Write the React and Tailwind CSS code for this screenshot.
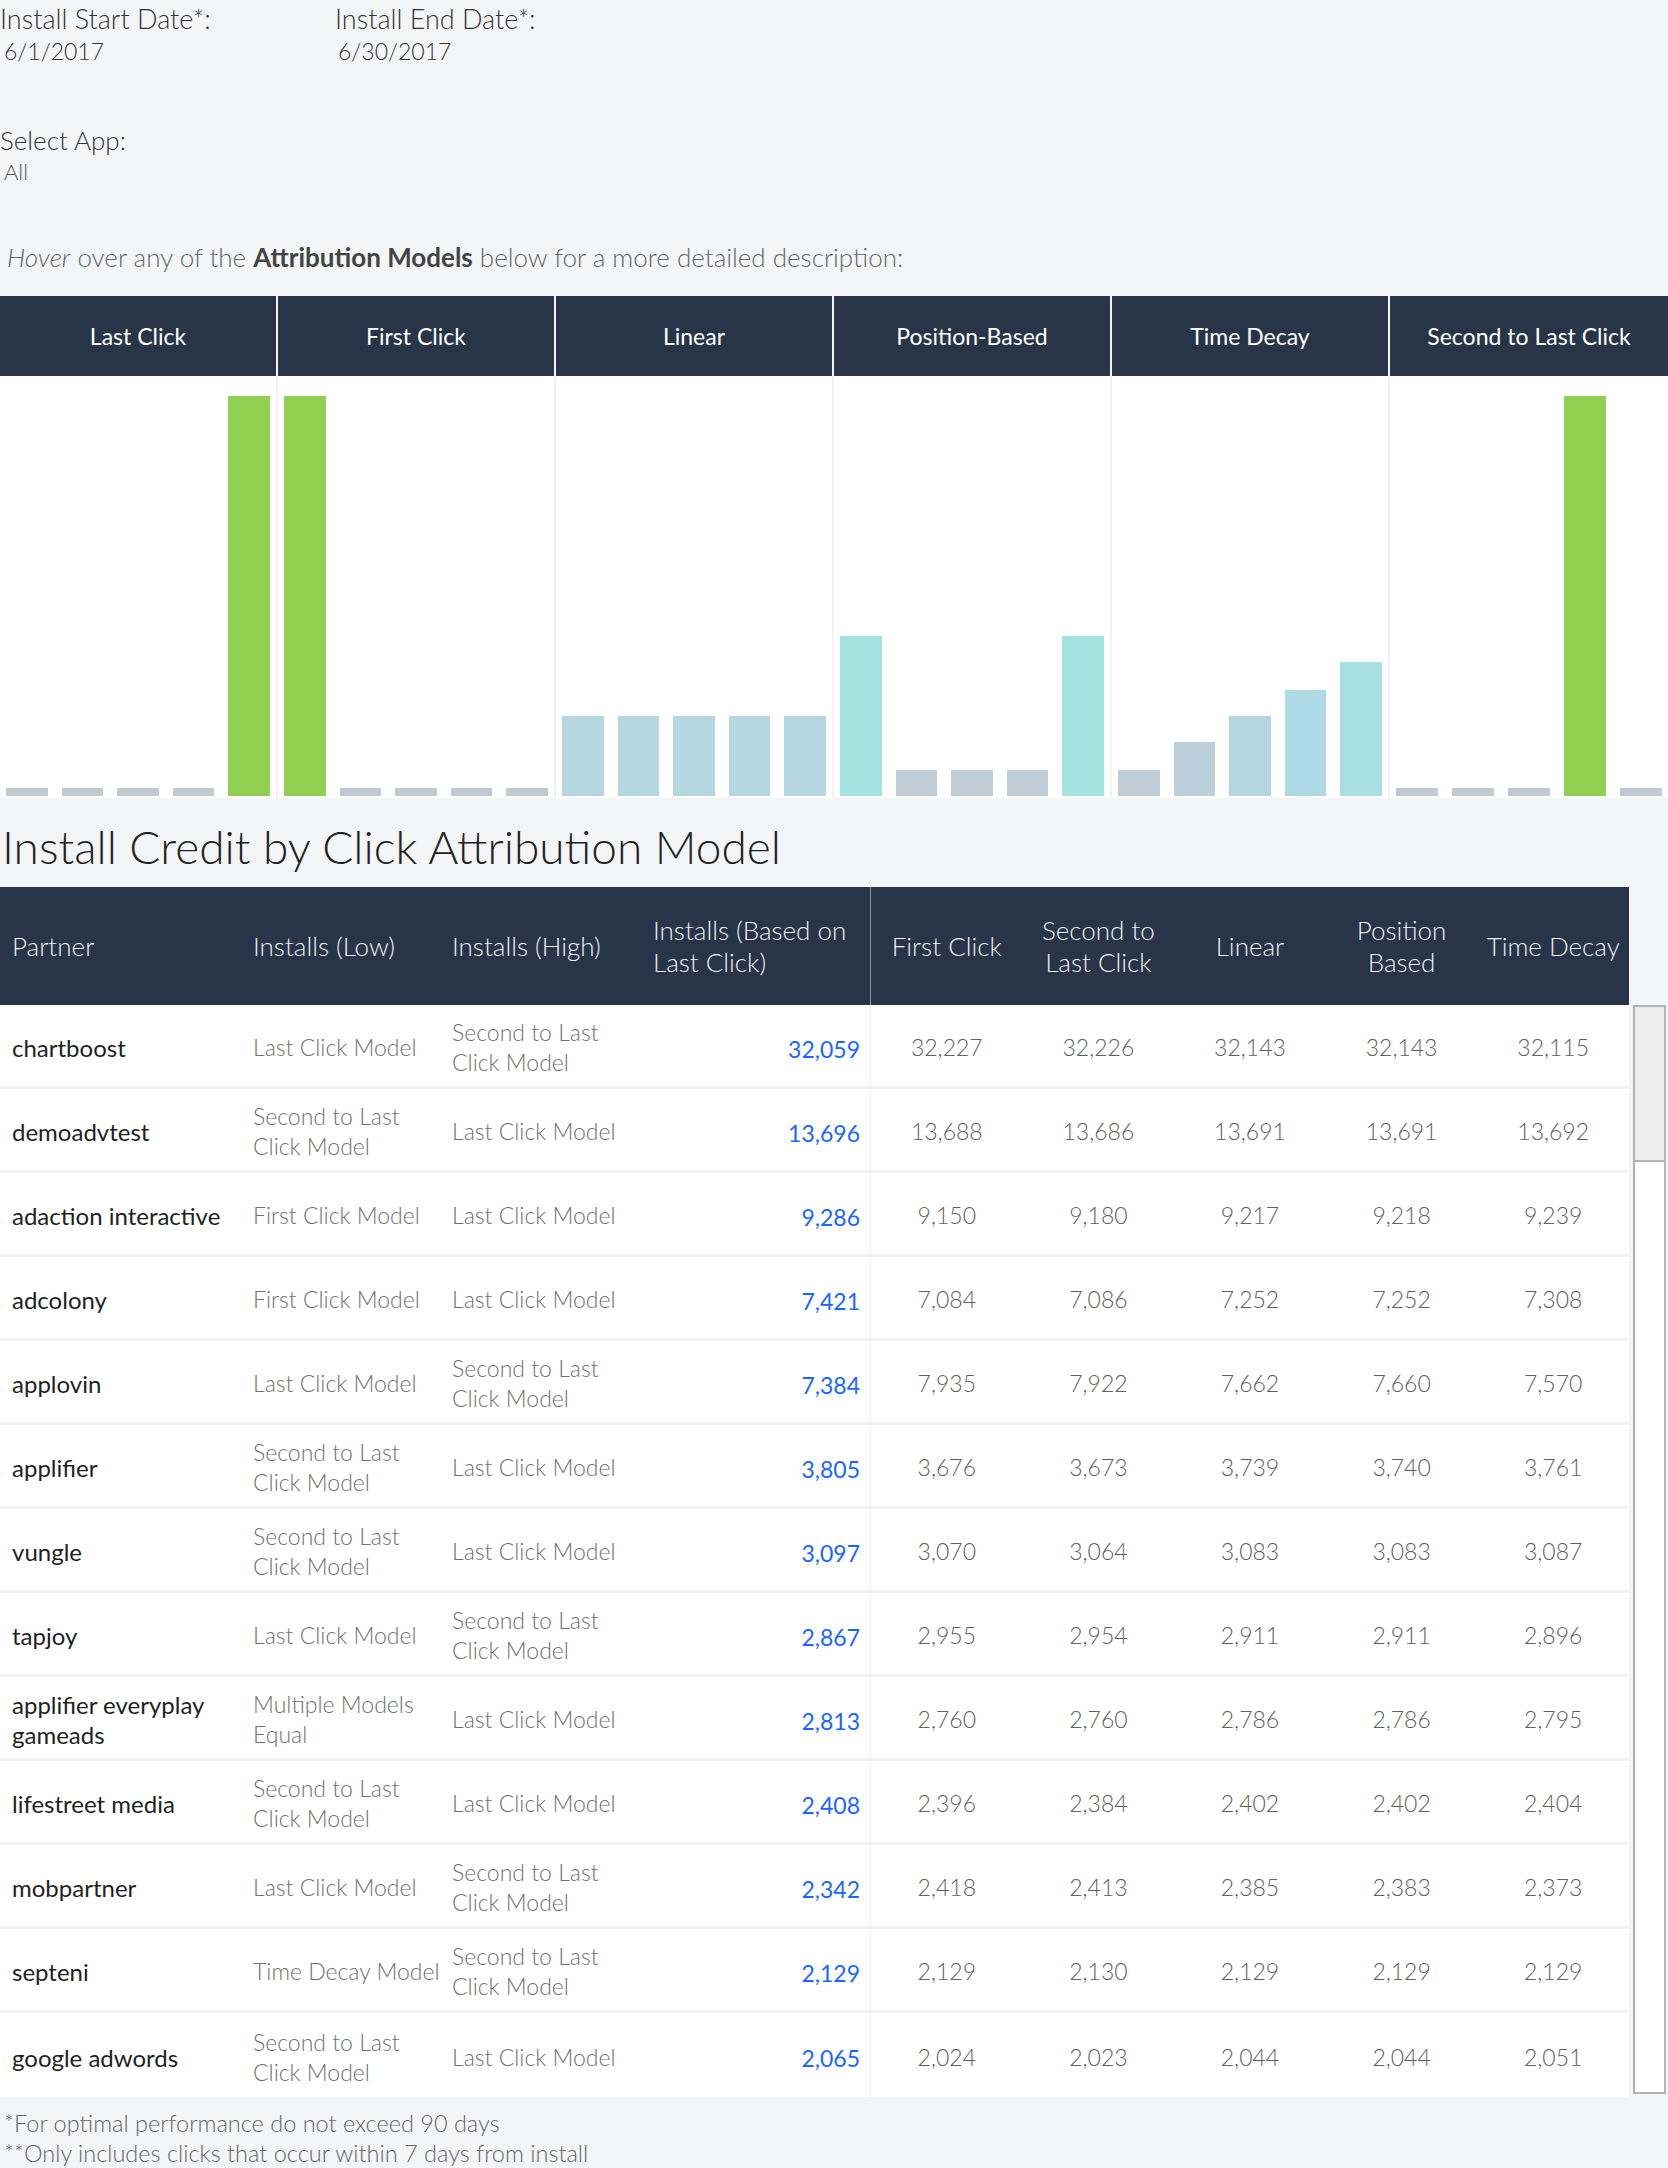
const GRAY = '#c4c9d0';
const GREEN = '#90cf4f';

const MODELS = [
  { name: 'Last Click', bars: [[8, GRAY], [8, GRAY], [8, GRAY], [8, GRAY], [400, GREEN]] },
  { name: 'First Click', bars: [[400, GREEN], [8, GRAY], [8, GRAY], [8, GRAY], [8, GRAY]] },
  { name: 'Linear', bars: [[80, '#b4d7e0'], [80, '#b4d7e0'], [80, '#b4d7e0'], [80, '#b4d7e0'], [80, '#b4d7e0']] },
  { name: 'Position-Based', bars: [[160, '#a2e3e0'], [26, '#c0cdd6'], [26, '#c0cdd6'], [26, '#c0cdd6'], [160, '#a2e3e0']] },
  { name: 'Time Decay', bars: [[26, '#c0cdd6'], [54, '#bbd0da'], [80, '#b4d6e0'], [106, '#addae6'], [134, '#a8e0e4']] },
  { name: 'Second to Last Click', bars: [[8, GRAY], [8, GRAY], [8, GRAY], [400, GREEN], [8, GRAY]] },
];

const ROWS = [
  ['chartboost', 'Last Click Model', 'Second to Last Click Model', '32,059', '32,227', '32,226', '32,143', '32,143', '32,115'],
  ['demoadvtest', 'Second to Last Click Model', 'Last Click Model', '13,696', '13,688', '13,686', '13,691', '13,691', '13,692'],
  ['adaction interactive', 'First Click Model', 'Last Click Model', '9,286', '9,150', '9,180', '9,217', '9,218', '9,239'],
  ['adcolony', 'First Click Model', 'Last Click Model', '7,421', '7,084', '7,086', '7,252', '7,252', '7,308'],
  ['applovin', 'Last Click Model', 'Second to Last Click Model', '7,384', '7,935', '7,922', '7,662', '7,660', '7,570'],
  ['applifier', 'Second to Last Click Model', 'Last Click Model', '3,805', '3,676', '3,673', '3,739', '3,740', '3,761'],
  ['vungle', 'Second to Last Click Model', 'Last Click Model', '3,097', '3,070', '3,064', '3,083', '3,083', '3,087'],
  ['tapjoy', 'Last Click Model', 'Second to Last Click Model', '2,867', '2,955', '2,954', '2,911', '2,911', '2,896'],
  ['applifier everyplay gameads', 'Multiple Models Equal', 'Last Click Model', '2,813', '2,760', '2,760', '2,786', '2,786', '2,795'],
  ['lifestreet media', 'Second to Last Click Model', 'Last Click Model', '2,408', '2,396', '2,384', '2,402', '2,402', '2,404'],
  ['mobpartner', 'Last Click Model', 'Second to Last Click Model', '2,342', '2,418', '2,413', '2,385', '2,383', '2,373'],
  ['septeni', 'Time Decay Model', 'Second to Last Click Model', '2,129', '2,129', '2,130', '2,129', '2,129', '2,129'],
  ['google adwords', 'Second to Last Click Model', 'Last Click Model', '2,065', '2,024', '2,023', '2,044', '2,044', '2,051'],
];

const GRID = 'grid grid-cols-[240px_200px_200px_231px_repeat(5,1fr)]';

export default function App() {
  return (
    <div className="w-[1668px] min-h-[2168px] bg-[#f4f5f7] text-[#333] font-['Lato',sans-serif] font-light">
      {/* filters */}
      <div className="flex pt-[3px]">
        <div className="w-[335px]">
          <div className="text-[27px] leading-[32px]">Install Start Date*:</div>
          <div className="pl-[4px] text-[23px] leading-[33px]">6/1/2017</div>
        </div>
        <div>
          <div className="text-[27px] leading-[32px]">Install End Date*:</div>
          <div className="pl-[3px] text-[23px] leading-[33px]">6/30/2017</div>
        </div>
      </div>
      <div className="mt-[56px]">
        <div className="text-[26px] leading-[32px]">Select App:</div>
        <div className="pl-[4px] text-[22px] leading-[32px] text-[#555]">All</div>
      </div>
      <div className="mt-[53px] pl-[7px] text-[26px] leading-[32px] text-[#666]">
        <i>Hover</i> over any of the <b className="font-bold text-[#444]">Attribution Models</b> below for a more detailed description:
      </div>

      {/* chart */}
      <div className="mt-[23px] grid grid-cols-6">
        {MODELS.map((m, i) => (
          <div key={m.name} className={i < 5 ? 'border-r-2 border-[#f1f2f4]' : ''}>
            <div className="h-[80px] bg-[#283447] flex items-center justify-center text-white text-[23px] font-normal">
              {m.name}
            </div>
            <div className="h-[422px] bg-white flex items-end gap-[14px] px-[6px] pb-[2px]">
              {m.bars.map(([h, c], j) => (
                <div key={j} className="w-[42px]" style={{ height: h, backgroundColor: c }} />
              ))}
            </div>
          </div>
        ))}
      </div>

      {/* table title */}
      <div className="mt-[21px] pl-[2px] text-[46px] leading-[56px] text-[#222]">Install Credit by Click Attribution Model</div>

      <div className="mt-[12px] flex items-start gap-[4px]">
        <div className="w-[1629px]">
          <div className={`${GRID} h-[118px] bg-[#283447] text-[#eef0f3] text-[26px] leading-[32px] font-light`}>
            <div className="flex items-center pl-[12px]">Partner</div>
            <div className="flex items-center pl-[13px]">Installs (Low)</div>
            <div className="flex items-center pl-[12px]">Installs (High)</div>
            <div className="flex items-center pl-[13px] pr-[6px] border-r border-[#8a93a3]">Installs (Based on Last Click)</div>
            <div className="flex items-center justify-center text-center">First Click</div>
            <div className="flex items-center justify-center text-center px-[16px]">Second to Last Click</div>
            <div className="flex items-center justify-center text-center">Linear</div>
            <div className="flex items-center justify-center text-center px-[26px]">Position Based</div>
            <div className="flex items-center justify-center text-center whitespace-nowrap">Time Decay</div>
          </div>
          {ROWS.map((r) => (
            <div key={r[0]} className={`${GRID} h-[84px] bg-white border-b-[3px] border-[#f1f2f4] last:border-b-0 text-[23px] leading-[30px]`}>
              <div className="flex items-center pl-[12px] pr-[4px] pt-[5px] text-[24px] font-normal text-[#1f1f1f]">{r[0]}</div>
              <div className={`flex items-center pl-[13px] pt-[3px] text-[#707070] ${r[1].length <= 17 ? 'whitespace-nowrap' : 'pr-[4px]'}`}>{r[1]}</div>
              <div className="flex items-center pl-[12px] pr-[8px] pt-[3px] text-[#707070]">{r[2]}</div>
              <div className="flex items-center justify-end pr-[10px] pt-[6px] text-[#1a66ff] font-normal border-r border-[#f1f2f4]">{r[3]}</div>
              {r.slice(4).map((v, k) => (
                <div key={k} className="flex items-center justify-center pt-[3px] text-[#606060]">{v}</div>
              ))}
            </div>
          ))}
        </div>
        <div className="mt-[118px] w-[33px] h-[1089px] border-2 border-[#b3b3b3] bg-white">
          <div className="h-[155px] bg-[#eeeeee] border-b-2 border-[#b3b3b3]" />
        </div>
      </div>

      {/* notes */}
      <div className="mt-[11px] pl-[4px] text-[23.5px] leading-[30px] text-[#666]">
        <div>*For optimal performance do not exceed 90 days</div>
        <div>**Only includes clicks that occur within 7 days from install</div>
      </div>
    </div>
  );
}
